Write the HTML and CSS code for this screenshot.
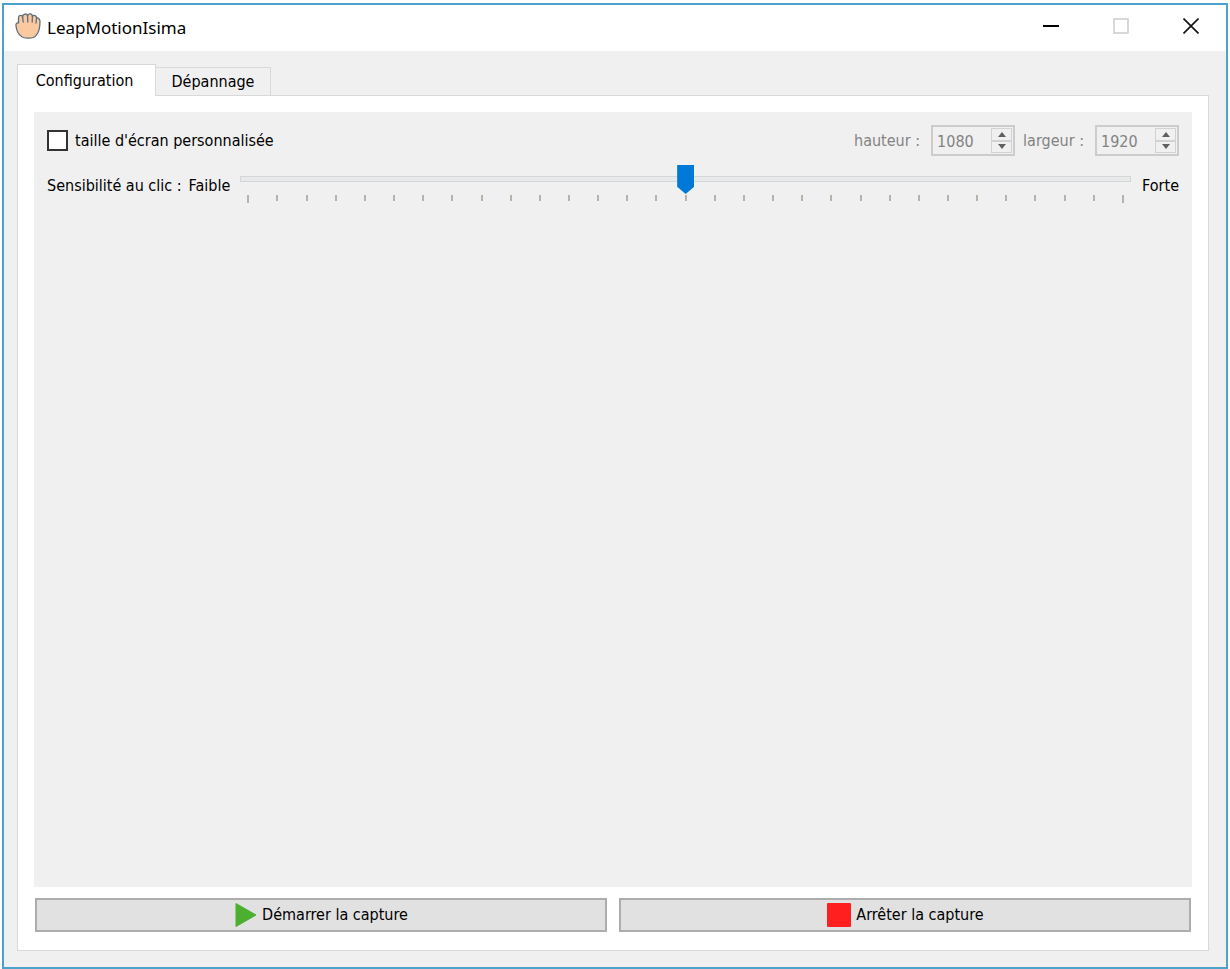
FILE: index.html
```html
<!DOCTYPE html>
<html lang="fr">
<head>
    <meta charset="UTF-8">
    <meta name="viewport" content="width=device-width, initial-scale=1.0">
    <title>LeapMotionIsima</title>
    <link rel="stylesheet" href="styles.css">
</head>
<body>
    <div class="window">
        <header class="titlebar">
            <svg class="logo" width="26" height="28" viewBox="0 0 26 28">
                <path d="M6 24 C3 22 1.500 18 1 14 C0.600 11.500 2 10.500 3.500 11 L3.500 6 C3.500 3 7 2.600 7.600 5 C7.600 1.500 12 1 12.600 4 C13 1 17.400 1.400 17.400 4.500 C18.600 2.600 21.600 3.500 21.600 6 C23.400 5.600 25 7 25 9.500 C25 15 24.500 20 21 23.500 C19 27 8 27 6 24 Z" fill="#fac9a0" stroke="#5d6e7c" stroke-width="1.300" stroke-linejoin="round"/>
                <path d="M7.600 5 L8.200 10 M12.600 4 L12.800 10 M17.400 4.500 L17.200 10 M21.600 6 L21 11" fill="none" stroke="#5d6e7c" stroke-width="1.300" stroke-linecap="round"/>
            </svg>
            <h1>LeapMotionIsima</h1>
            <div class="controls">
                <button type="button" aria-label="Réduire">
                    <svg width="16" height="16" viewBox="0 0 16 16"><path d="M0 8h16" stroke="#000" stroke-width="2"/></svg>
                </button>
                <button type="button" aria-label="Agrandir" disabled>
                    <svg width="16" height="16" viewBox="0 0 16 16"><path d="M1 1h14v14H1z" fill="none" stroke="#ccc" stroke-width="1.500"/></svg>
                </button>
                <button type="button" aria-label="Fermer">
                    <svg width="16" height="16" viewBox="0 0 16 16"><path d="M.5.5l15 15M15.500.5l-15 15" stroke="#111" stroke-width="1.600"/></svg>
                </button>
            </div>
        </header>

        <main>
            <div class="tabs" role="tablist">
                <button type="button" class="tab active" role="tab" aria-selected="true">Configuration</button>
                <button type="button" class="tab" role="tab" aria-selected="false">Dépannage</button>
            </div>

            <div class="panel">
                <form class="settings" id="settings">
                    <div class="row">
                        <input type="checkbox" id="custom">
                        <label for="custom">taille d'écran personnalisée</label>
                        <div class="sizes">
                            <label for="height">hauteur :</label>
                            <div class="spinbox">
                                <input type="number" id="height" value="1080" disabled>
                                <div class="arrows">
                                    <button type="button" aria-label="Augmenter la hauteur" disabled><svg width="8" height="5" viewBox="0 0 8 5"><path d="M0 5l4-5 4 5z"/></svg></button>
                                    <button type="button" aria-label="Diminuer la hauteur" disabled><svg width="8" height="5" viewBox="0 0 8 5"><path d="M0 0l4 5 4-5z"/></svg></button>
                                </div>
                            </div>
                            <label for="width">largeur :</label>
                            <div class="spinbox">
                                <input type="number" id="width" value="1920" disabled>
                                <div class="arrows">
                                    <button type="button" aria-label="Augmenter la largeur" disabled><svg width="8" height="5" viewBox="0 0 8 5"><path d="M0 5l4-5 4 5z"/></svg></button>
                                    <button type="button" aria-label="Diminuer la largeur" disabled><svg width="8" height="5" viewBox="0 0 8 5"><path d="M0 0l4 5 4-5z"/></svg></button>
                                </div>
                            </div>
                        </div>
                    </div>

                    <div class="row sensitivity">
                        <label for="click">Sensibilité au clic :</label>
                        <span>Faible</span>
                        <div class="slider">
                            <input type="range" id="click" min="0" max="30" value="15">
                            <div class="ticks" id="ticks"></div>
                        </div>
                        <span>Forte</span>
                    </div>
                </form>

                <div class="actions">
                    <button type="button">
                        <svg width="24" height="26" viewBox="0 0 24 26"><path d="M2 1.500L22 13 2 24.500z" fill="#4caf2f" stroke="#4caf2f" stroke-linejoin="round"/></svg>
                        Démarrer la capture
                    </button>
                    <button type="button">
                        <svg width="26" height="26" viewBox="0 0 26 26"><rect x="1" y="1" width="24" height="24" rx="1" fill="#ff1f1f"/></svg>
                        Arrêter la capture
                    </button>
                </div>
            </div>
        </main>
    </div>

    <script>
        // one tick per slider step
        const click = document.getElementById('click');
        const ticks = document.getElementById('ticks');
        for (let i = Number(click.min); i <= Number(click.max); i++) {
            ticks.appendChild(document.createElement('i'));
        }

        // the size fields only work with a custom screen size
        document.getElementById('custom').addEventListener('change', function(e) {
            document.querySelectorAll('.sizes input, .sizes button').forEach(function(el) {
                el.disabled = !e.target.checked;
            });
        });

        document.querySelectorAll('.spinbox').forEach(function(box) {
            const input = box.querySelector('input');
            const buttons = box.querySelectorAll('button');
            buttons[0].addEventListener('click', () => input.stepUp());
            buttons[1].addEventListener('click', () => input.stepDown());
        });
    </script>
</body>
</html>
```
FILE: styles.css
```css
* {
    box-sizing: border-box;
}
body {
    margin: 0;
    padding: 3px 2px 0;
    min-height: 100vh;
    display: flex;
    background: #fff;
    color: #000;
    font: 16px/20px "DejaVu Sans Condensed", "Open Sans", sans-serif;
}
button, input {
    font: inherit;
    color: inherit;
    margin: 0;
}
.window {
    flex: 1;
    display: flex;
    flex-direction: column;
    border: 2px solid #4ba3cb;
    background: #f0f0f0;
}
.titlebar {
    display: flex;
    align-items: center;
    height: 46px;
    padding-left: 11px;
    background: #fff;
}
.logo {
    margin-bottom: 4px;
}
h1 {
    margin: 0 0 0 6px;
    font: 17px/20px "Noto Sans", sans-serif;
}
.controls {
    display: flex;
    align-self: stretch;
    margin-left: auto;
}
.controls button {
    width: 70px;
    padding: 0 0 4px;
    border: none;
    background: none;
}
.controls svg {
    display: block;
    margin: 0 auto;
}
main {
    flex: 1;
    display: flex;
    flex-direction: column;
    padding: 13px 17px 16px 13px;
}
.tabs {
    display: flex;
    align-items: flex-end;
}
.tab {
    width: 115px;
    height: 28px;
    padding: 0;
    border: 1px solid #d9d9d9;
    border-width: 1px 1px 0 0;
    background: #f0f0f0;
}
.tab.active {
    position: relative;
    width: 139px;
    height: 32px;
    margin-bottom: -1px;
    padding-right: 4px;
    border-left-width: 1px;
    background: #fff;
}
.panel {
    flex: 1;
    display: flex;
    flex-direction: column;
    gap: 11px;
    padding: 16px 16px 18px;
    border: 1px solid #d9d9d9;
    background: #fff;
}
.settings {
    flex: 1;
    padding: 13px;
    background: #f0f0f0;
}
.row {
    display: flex;
    align-items: center;
}
input[type="checkbox"] {
    appearance: none;
    width: 21px;
    height: 21px;
    margin-right: 7px;
    border: 2px solid #333;
    background: #fff;
}
input[type="checkbox"]:checked {
    background: #0078d7;
}
.sizes {
    display: flex;
    align-items: center;
    margin-left: auto;
    color: #838383;
}
.spinbox {
    display: flex;
    width: 84px;
    height: 31px;
    margin-left: 11px;
    padding: 1px;
    border: 2px solid #ccc;
}
.spinbox + label {
    margin-left: 8px;
}
.spinbox input {
    flex: 1;
    min-width: 0;
    padding: 2px 0 0 3px;
    border: none;
    background: none;
    appearance: textfield;
}
.spinbox input::-webkit-inner-spin-button {
    appearance: none;
    margin: 0;
}
.arrows {
    display: flex;
    flex-direction: column;
    width: 21px;
}
.arrows button {
    flex: 1;
    display: flex;
    align-items: center;
    justify-content: center;
    padding: 0;
    border: 1px solid #d2d2d2;
    background: #f0f0f0;
    fill: #606060;
}
.sensitivity {
    margin-top: 8px;
}
.sensitivity span:first-of-type {
    margin-left: 7px;
}
.slider {
    flex: 1;
    height: 43px;
    margin: 0 11px 0 10px;
}
input[type="range"] {
    appearance: none;
    display: block;
    width: 100%;
    height: 30px;
    background: none;
}
input[type="range"]::-webkit-slider-runnable-track {
    height: 6px;
    border: 1px solid #d6d6d6;
    background: #e7eaea;
}
input[type="range"]::-webkit-slider-thumb {
    appearance: none;
    width: 17px;
    height: 29px;
    margin-top: -12px;
    background: #0078d7;
    clip-path: polygon(0 0, 100% 0, 100% 75%, 50% 100%, 0 75%);
}
.ticks {
    display: flex;
    justify-content: space-between;
    margin: 1px 7px 0;
}
.ticks i {
    width: 2px;
    height: 6px;
    background: #b5b3aa;
}
.ticks i:first-child, .ticks i:last-child {
    height: 8px;
}
.actions {
    display: flex;
    gap: 12px;
    padding: 0 1px;
}
.actions button {
    flex: 1;
    display: flex;
    align-items: center;
    justify-content: center;
    gap: 4px;
    height: 34px;
    padding: 0;
    border: 2px solid #adadad;
    background: #e1e1e1;
}
```
